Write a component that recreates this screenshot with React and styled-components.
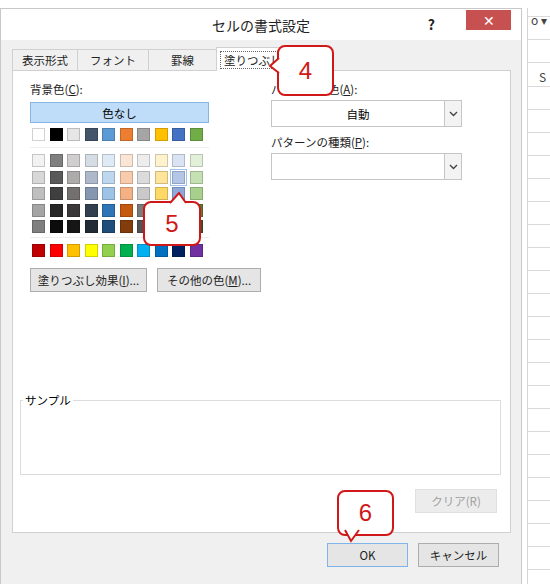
import styled, { createGlobalStyle } from "styled-components";

const Global = createGlobalStyle`
  body { margin: 0; background: #fff; font-family: "Noto Sans CJK JP", "Liberation Sans", sans-serif; }
`;

const theme = [
  ["#ffffff", "#000000", "#e7e6e6", "#44546a", "#5b9bd5", "#ed7d31", "#a5a5a5", "#ffc000", "#4472c4", "#70ad47"],
  ["#f2f2f2", "#7f7f7f", "#d0cece", "#d6dce4", "#deebf6", "#fbe5d5", "#ededed", "#fff2cc", "#dae3f3", "#e2efd9"],
  ["#d8d8d8", "#595959", "#aeabab", "#adb9ca", "#bdd7ee", "#f8cbad", "#dbdbdb", "#fee599", "#b4c6e7", "#c5e0b3"],
  ["#bfbfbf", "#3f3f3f", "#757070", "#8496b0", "#9dc3e6", "#f4b183", "#c9c9c9", "#ffd965", "#8eaadb", "#a8d08d"],
  ["#a5a5a5", "#262626", "#3a3838", "#323f4f", "#2e75b5", "#c55a11", "#7b7b7b", "#bf9000", "#2f5496", "#538135"],
  ["#7f7f7f", "#0c0c0c", "#171616", "#222a35", "#1e4e79", "#833c0b", "#525252", "#7f6000", "#1f3864", "#375623"],
];
const standard = ["#c00000", "#ff0000", "#ffc000", "#ffff00", "#92d050", "#00b050", "#00b0f0", "#0070c0", "#002060", "#7030a0"];

const Page = styled.div`
  display: flex;
  width: 550px;
  height: 584px;
  padding-top: 8px;
  box-sizing: border-box;
  position: relative;
  overflow: hidden;
`;
const Dialog = styled.div`
  width: 522px;
  border: 1px solid #c8c8c8;
  border-bottom: none;
  background: #f0f0f0;
  box-sizing: border-box;
  display: flex;
  flex-direction: column;
`;
const TitleBar = styled.div`
  height: 31px;
  background: #fff;
  display: flex;
  align-items: center;
  justify-content: center;
  position: relative;
  font-size: 14px;
  color: #222;
`;
const Help = styled.span`
  position: absolute;
  right: 86px;
  top: 5px;
  font-weight: bold;
  font-size: 14px;
`;
const Close = styled.div`
  position: absolute;
  right: 10px;
  top: 1px;
  width: 45px;
  height: 20px;
  background: #c75050;
  color: #fff;
  display: flex;
  align-items: center;
  justify-content: center;
  font-size: 14px;
`;
const Body = styled.div`
  padding: 6px 10px 0 11px;
  display: flex;
  flex-direction: column;
  flex: 1;
`;
const Tabs = styled.div`
  display: flex;
  height: 24px;
  align-items: flex-end;
`;
const Tab = styled.div`
  height: ${p => (p.$active ? 24 : 21)}px;
  padding: 0 ${p => p.$pad}px;
  border: 1px solid #d0d0d0;
  border-bottom: none;
  margin-right: -1px;
  background: ${p => (p.$active ? "#fff" : "#f0f0f0")};
  font-size: 11.5px;
  white-space: nowrap;
  display: flex;
  align-items: center;
  color: #222;
  box-sizing: border-box;
  position: relative;
  z-index: ${p => (p.$active ? 1 : 0)};
  margin-bottom: ${p => (p.$active ? -1 : 0)}px;
  span { ${p => p.$active && "outline: 1px dotted #666; padding: 0 3px;"} }
`;
const Pane = styled.div`
  background: #fff;
  border: 1px solid #d0d0d0;
  height: 463px;
  box-sizing: border-box;
  padding: 10px 17px 0 17px;
  display: flex;
  flex-direction: column;
`;
const Columns = styled.div`
  display: flex;
  gap: 62px;
`;
const Left = styled.div`
  width: 179px;
`;
const Right = styled.div`
  width: 191px;
  font-size: 11.5px;
`;
const Label = styled.div`
  font-size: 11.5px;
  color: #222;
  height: 17px;
  white-space: nowrap;
  margin-bottom: ${p => p.$mb || 0}px;
`;
const NoColor = styled.div`
  height: 19px;
  background: #bfdcf8;
  border: 1px solid #85b5e3;
  display: flex;
  align-items: center;
  justify-content: center;
  font-size: 11.5px;
  margin-bottom: 5px;
`;
const Row = styled.div`
  display: flex;
  gap: 4.5px;
  padding-left: 2px;
  margin-bottom: ${p => p.$mb ?? 3.5}px;
`;
const Sw = styled.div`
  width: 13px;
  height: 13px;
  box-sizing: border-box;
  background: ${p => p.$c};
  border: 1px solid rgba(0, 0, 0, 0.18);
  outline: ${p => (p.$sel ? "1px solid #9cc3ea" : "none")};
  outline-offset: 1px;
`;
const Divider = styled.div`
  height: 1px;
  background: #eee;
  margin: ${p => p.$mt || 0}px 0 6px;
`;
const Buttons = styled.div`
  display: flex;
  gap: 10px;
  margin-top: 11px;
`;
const Button = styled.div`
  height: 24px;
  width: ${p => p.$w}px;
  flex-shrink: 0;
  white-space: nowrap;
  background: #e5e5e5;
  border: 1px solid ${p => (p.$focus ? "#7eb4ea" : "#adadad")};
  color: ${p => (p.$dis ? "#a0a0a0" : "#222")};
  ${p => p.$dis && "border-color:#e0e0e0; background:#ececec;"}
  display: flex;
  align-items: center;
  justify-content: center;
  font-size: 11.5px;
  box-sizing: border-box;
`;
const Select = styled.div`
  height: 25px;
  border: 1px solid #c5c5c5;
  display: flex;
  margin-bottom: 7px;
  margin-top: 2px;
`;
const SelectText = styled.div`
  flex: 1;
  display: flex;
  align-items: center;
  justify-content: center;
  font-size: 11.5px;
`;
const Arrow = styled.div`
  width: 16px;
  border-left: 1px solid #c5c5c5;
  background: #f3f3f3;
  display: flex;
  align-items: center;
  justify-content: center;
`;
const Sample = styled.fieldset`
  margin: 100px 0 0 -10px;
  width: 481px;
  height: 83px;
  border: 1px solid #dcdcdc;
  padding: 0;
  box-sizing: border-box;
  legend { font-size: 11.5px; padding: 0 2px; margin-left: 2px; }
`;
const ClearRow = styled.div`
  display: flex;
  justify-content: flex-end;
  margin: 14px -4px 0 0;
`;
const Footer = styled.div`
  display: flex;
  justify-content: flex-end;
  gap: 10px;
  padding: 10px 12px 0 0;
`;
const Sheet = styled.div`
  flex: 1;
  margin-left: 5px;
  border-left: 1px solid #d4d4d4;
  background: repeating-linear-gradient(to bottom, #fff 0, #fff 22px, #dadada 22px, #dadada 23px);
  background-position: 0 56px;
  position: relative;
  font-size: 12px;
  color: #444;
`;
const SheetText = styled.div`
  position: absolute;
  top: ${p => p.$y}px;
  left: ${p => p.$x}px;
`;
const Callout = styled.div`
  position: absolute;
  left: ${p => p.$x}px;
  top: ${p => p.$y}px;
  width: ${p => p.$w}px;
  height: ${p => p.$h}px;
  border: 2px solid #d01818;
  border-radius: 8px;
  background: #fff;
  color: #d01818;
  font-size: 24px;
  display: flex;
  align-items: center;
  justify-content: center;
  font-family: "Liberation Sans", sans-serif;
  z-index: 5;
`;
const Tail = styled.svg`
  position: absolute;
  overflow: visible;
  z-index: 6;
`;

const Chevron = () => (
  <svg width="9" height="6" viewBox="0 0 9 6"><path d="M1 1l3.5 3.5L8 1" fill="none" stroke="#444" strokeWidth="1.4" /></svg>
);

export default function App() {
  return (
    <>
      <Global />
      <Page>
        <Dialog>
          <TitleBar>
            セルの書式設定
            <Help>?</Help>
            <Close>✕</Close>
          </TitleBar>
          <Body>
            <Tabs>
              <Tab $pad={9}><span>表示形式</span></Tab>
              <Tab $pad={12}><span>フォント</span></Tab>
              <Tab $pad={22}><span>罫線</span></Tab>
              <Tab $pad={4} $active><span>塗りつぶし</span></Tab>
            </Tabs>
            <Pane>
              <Columns>
                <Left>
                  <Label $mb={4}>背景色(<u>C</u>):</Label>
                  <NoColor>色なし</NoColor>
                  <Row $mb={6}>{theme[0].map((c, i) => <Sw key={i} $c={c} />)}</Row>
                  <Divider />
                  {theme.slice(1).map((r, ri) => (
                    <Row key={ri}>{r.map((c, i) => <Sw key={i} $c={c} $sel={ri === 1 && i === 8} />)}</Row>
                  ))}
                  <Divider $mt={4} />
                  <Row>{standard.map((c, i) => <Sw key={i} $c={c} />)}</Row>
                  <Buttons>
                    <Button $w={117}>塗りつぶし効果(<u>I</u>)...</Button>
                    <Button $w={104}>その他の色(<u>M</u>)...</Button>
                  </Buttons>
                </Left>
                <Right>
                  <Label>パターンの色(<u>A</u>):</Label>
                  <Select><SelectText>自動</SelectText><Arrow><Chevron /></Arrow></Select>
                  <Label>パターンの種類(<u>P</u>):</Label>
                  <Select><SelectText /><Arrow><Chevron /></Arrow></Select>
                </Right>
              </Columns>
              <Sample><legend>サンプル</legend></Sample>
              <ClearRow><Button $w={82} $dis>クリア(R)</Button></ClearRow>
            </Pane>
            <Footer>
              <Button $w={81} $focus>OK</Button>
              <Button $w={81}>キャンセル</Button>
            </Footer>
          </Body>
        </Dialog>
        <Sheet>
          <SheetText $x={3} $y={3}>o ▾</SheetText>
          <SheetText $x={11} $y={60}>S</SheetText>
        </Sheet>

        <Tail width="1" height="1" style={{ left: 268, top: 64 }}>
          <path d="M11 -6 L2 2 L11 9" fill="#fff" stroke="#d01818" strokeWidth="2" />
        </Tail>
        <Callout $x={277} $y={45} $w={53} $h={47}>4</Callout>

        <Tail width="1" height="1" style={{ left: 170, top: 193 }}>
          <path d="M0 10 L9 0 L16 10" fill="#fff" stroke="#d01818" strokeWidth="2" />
        </Tail>
        <Callout $x={143} $y={201} $w={54} $h={41}>5</Callout>

        <Tail width="1" height="1" style={{ left: 345, top: 530 }}>
          <path d="M0 0 L6 11 L14 0" fill="#fff" stroke="#d01818" strokeWidth="2" />
        </Tail>
        <Callout $x={337} $y={490} $w={53} $h={42}>6</Callout>
      </Page>
    </>
  );
}
